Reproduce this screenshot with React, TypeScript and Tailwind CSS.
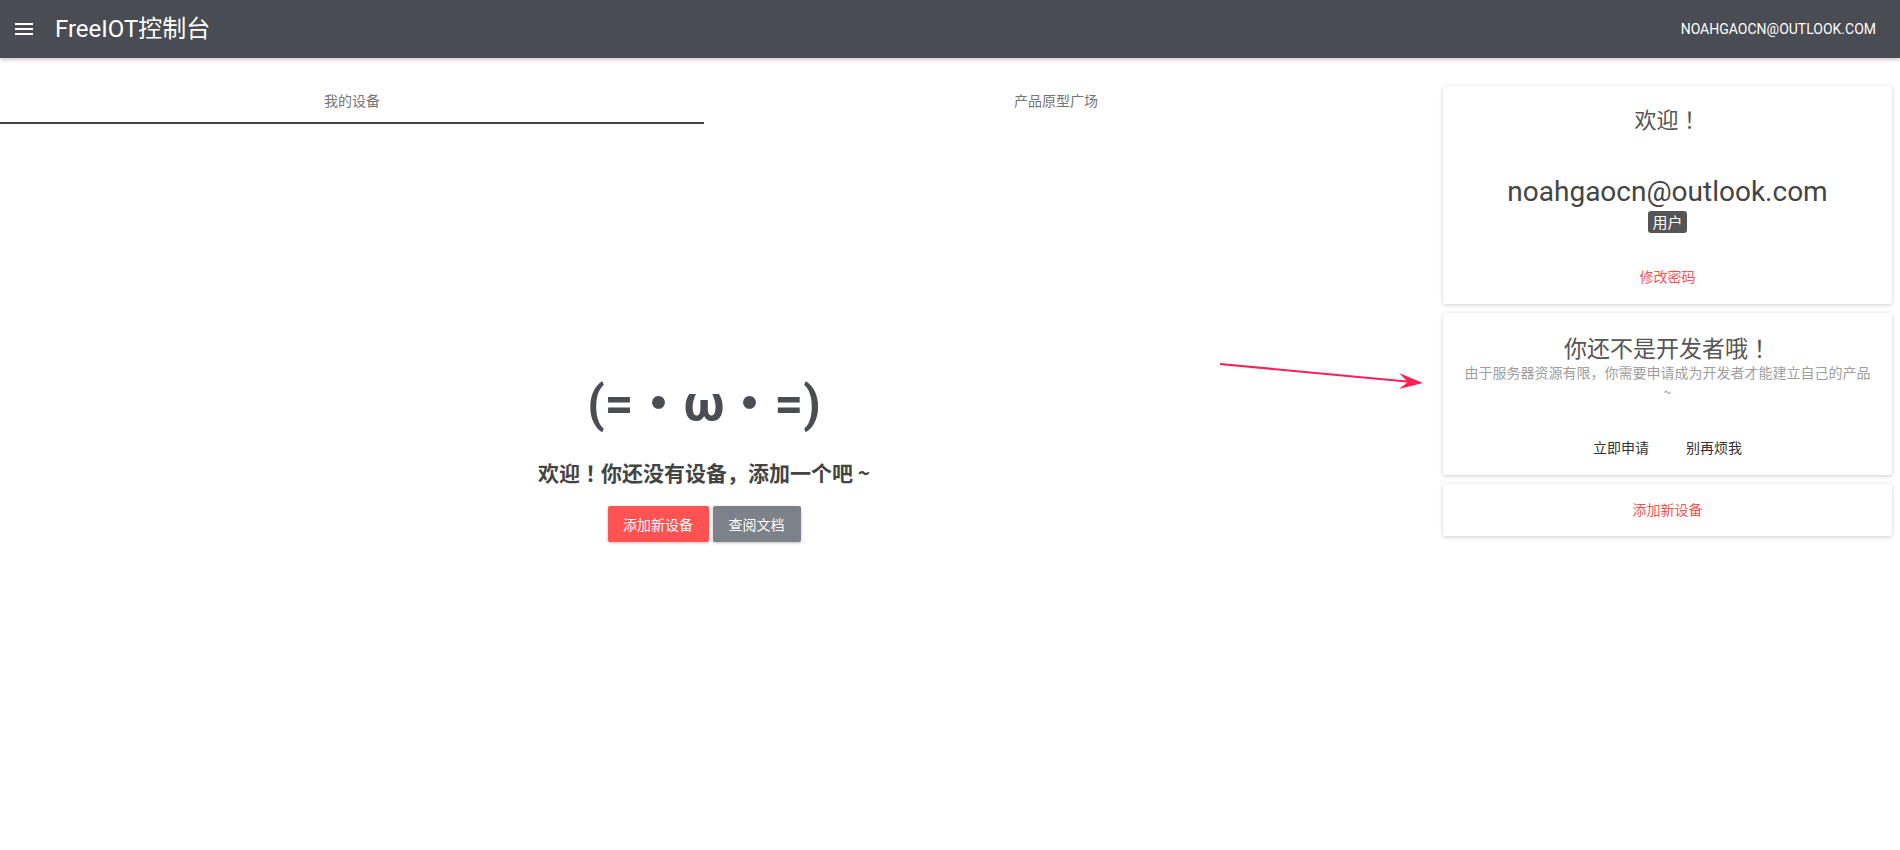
import React from "react";

const latin = { fontFamily: 'Roboto, "Noto Sans CJK SC", sans-serif' };
const cjk = { fontFamily: '"Noto Sans CJK SC", Roboto, sans-serif' };
const jp = { fontFamily: '"Noto Sans CJK JP", "Noto Sans CJK SC", sans-serif' };

function Bang() {
  return <span style={jp}>！</span>;
}

export default function App() {
  return (
    <div className="relative w-[1900px] h-[850px] bg-white overflow-hidden [text-spacing-trim:space-all]" style={latin}>
      <header className="relative z-10 flex h-[58px] items-center justify-between bg-[#494c52] pl-[12px] pr-[24px] shadow-[0_2px_4px_rgba(0,0,0,0.2)]">
        <div className="flex items-center">
          <svg width="24" height="24" viewBox="0 0 24 24" className="text-white">
            <path d="M3 18h18v-2H3v2zm0-5h18v-2H3v2zm0-7v2h18V6H3z" fill="currentColor" />
          </svg>
          <span className="ml-[19px] text-[24px] text-white leading-none">FreeIOT控制台</span>
        </div>
        <span className="text-[14px] text-white uppercase">noahgaocn@outlook.com</span>
      </header>

      <div className="flex">
        <div className="w-[1408px] flex flex-col items-stretch">
          <div className="mt-[19px] grid grid-cols-2 h-[47px]" style={cjk}>
            <div className="relative flex items-center justify-center text-[14px] text-[#757575]">
              我的设备
              <div className="absolute bottom-0 left-0 right-0 h-[2px] bg-[#424242]" />
            </div>
            <div className="flex items-center justify-center text-[14px] text-[#757575]">产品原型广场</div>
          </div>
          <div className="flex flex-col items-center pt-[250px]">
            <div className="text-[50px] font-bold leading-[60px] text-[#4a4d52]" style={latin}>(=・ω・=)</div>
            <div className="mt-[24px] text-[21px] font-bold leading-[28px] text-[#444]" style={cjk}>
              欢迎<Bang />你还没有设备，添加一个吧 ~
            </div>
            <div className="mt-[20px] flex gap-[4px]" style={cjk}>
              <button className="h-[36px] w-[101px] rounded-[2px] bg-[#ff5252] text-[14px] text-white shadow-[0_1px_3px_rgba(0,0,0,0.25)]">添加新设备</button>
              <button className="h-[36px] w-[88px] rounded-[2px] bg-[#7d8189] text-[14px] text-white shadow-[0_1px_3px_rgba(0,0,0,0.25)]">查阅文档</button>
            </div>
          </div>
        </div>

        <div className="ml-[35px] mt-[28px] w-[449px] flex flex-col gap-[9px]">
          <div className="h-[218px] rounded-[3px] bg-white shadow-[0_1px_4px_rgba(0,0,0,0.2)] flex flex-col items-center">
            <div className="mt-[18px] text-[22px] leading-[28px] text-[#555]" style={cjk}>
              欢迎<Bang />
            </div>
            <div className="mt-[42px] text-[28px] leading-[36px] text-[#444]">noahgaocn@outlook.com</div>
            <div className="mt-[1px] h-[22px] px-[4px] rounded-[3px] bg-[#555] text-white text-[15px] leading-[22px]" style={cjk}>用户</div>
            <div className="mt-[33px] text-[14px] leading-[20px] text-[#ff5252]" style={cjk}>修改密码</div>
          </div>

          <div className="h-[162px] rounded-[3px] bg-white shadow-[0_1px_4px_rgba(0,0,0,0.2)] flex flex-col items-center px-[20px]" style={cjk}>
            <div className="mt-[20px] text-[23px] leading-[28px] text-[#555]">
              你还不是开发者哦<Bang />
            </div>
            <div className="mt-[1px] text-center text-[14px] leading-[20px] text-[#9e9e9e]">由于服务器资源有限，你需要申请成为开发者才能建立自己的产品 ~</div>
            <div className="mt-[35px] flex gap-[37px] text-[14px] leading-[20px] text-[#333]">
              <span>立即申请</span>
              <span>别再烦我</span>
            </div>
          </div>

          <div className="h-[52px] rounded-[3px] bg-white shadow-[0_1px_4px_rgba(0,0,0,0.2)] flex items-center justify-center text-[14px] text-[#ff5252] pb-[1px]" style={cjk}>
            添加新设备
          </div>
        </div>
      </div>

      <svg className="absolute left-0 top-0 pointer-events-none" width="1900" height="850">
        <line x1="1220" y1="364" x2="1412" y2="382" stroke="#ff1f55" strokeWidth="2" />
        <path d="M1423 383 L1399 373 L1408 382 L1399 389 Z" fill="#ff1f55" />
      </svg>
    </div>
  );
}
